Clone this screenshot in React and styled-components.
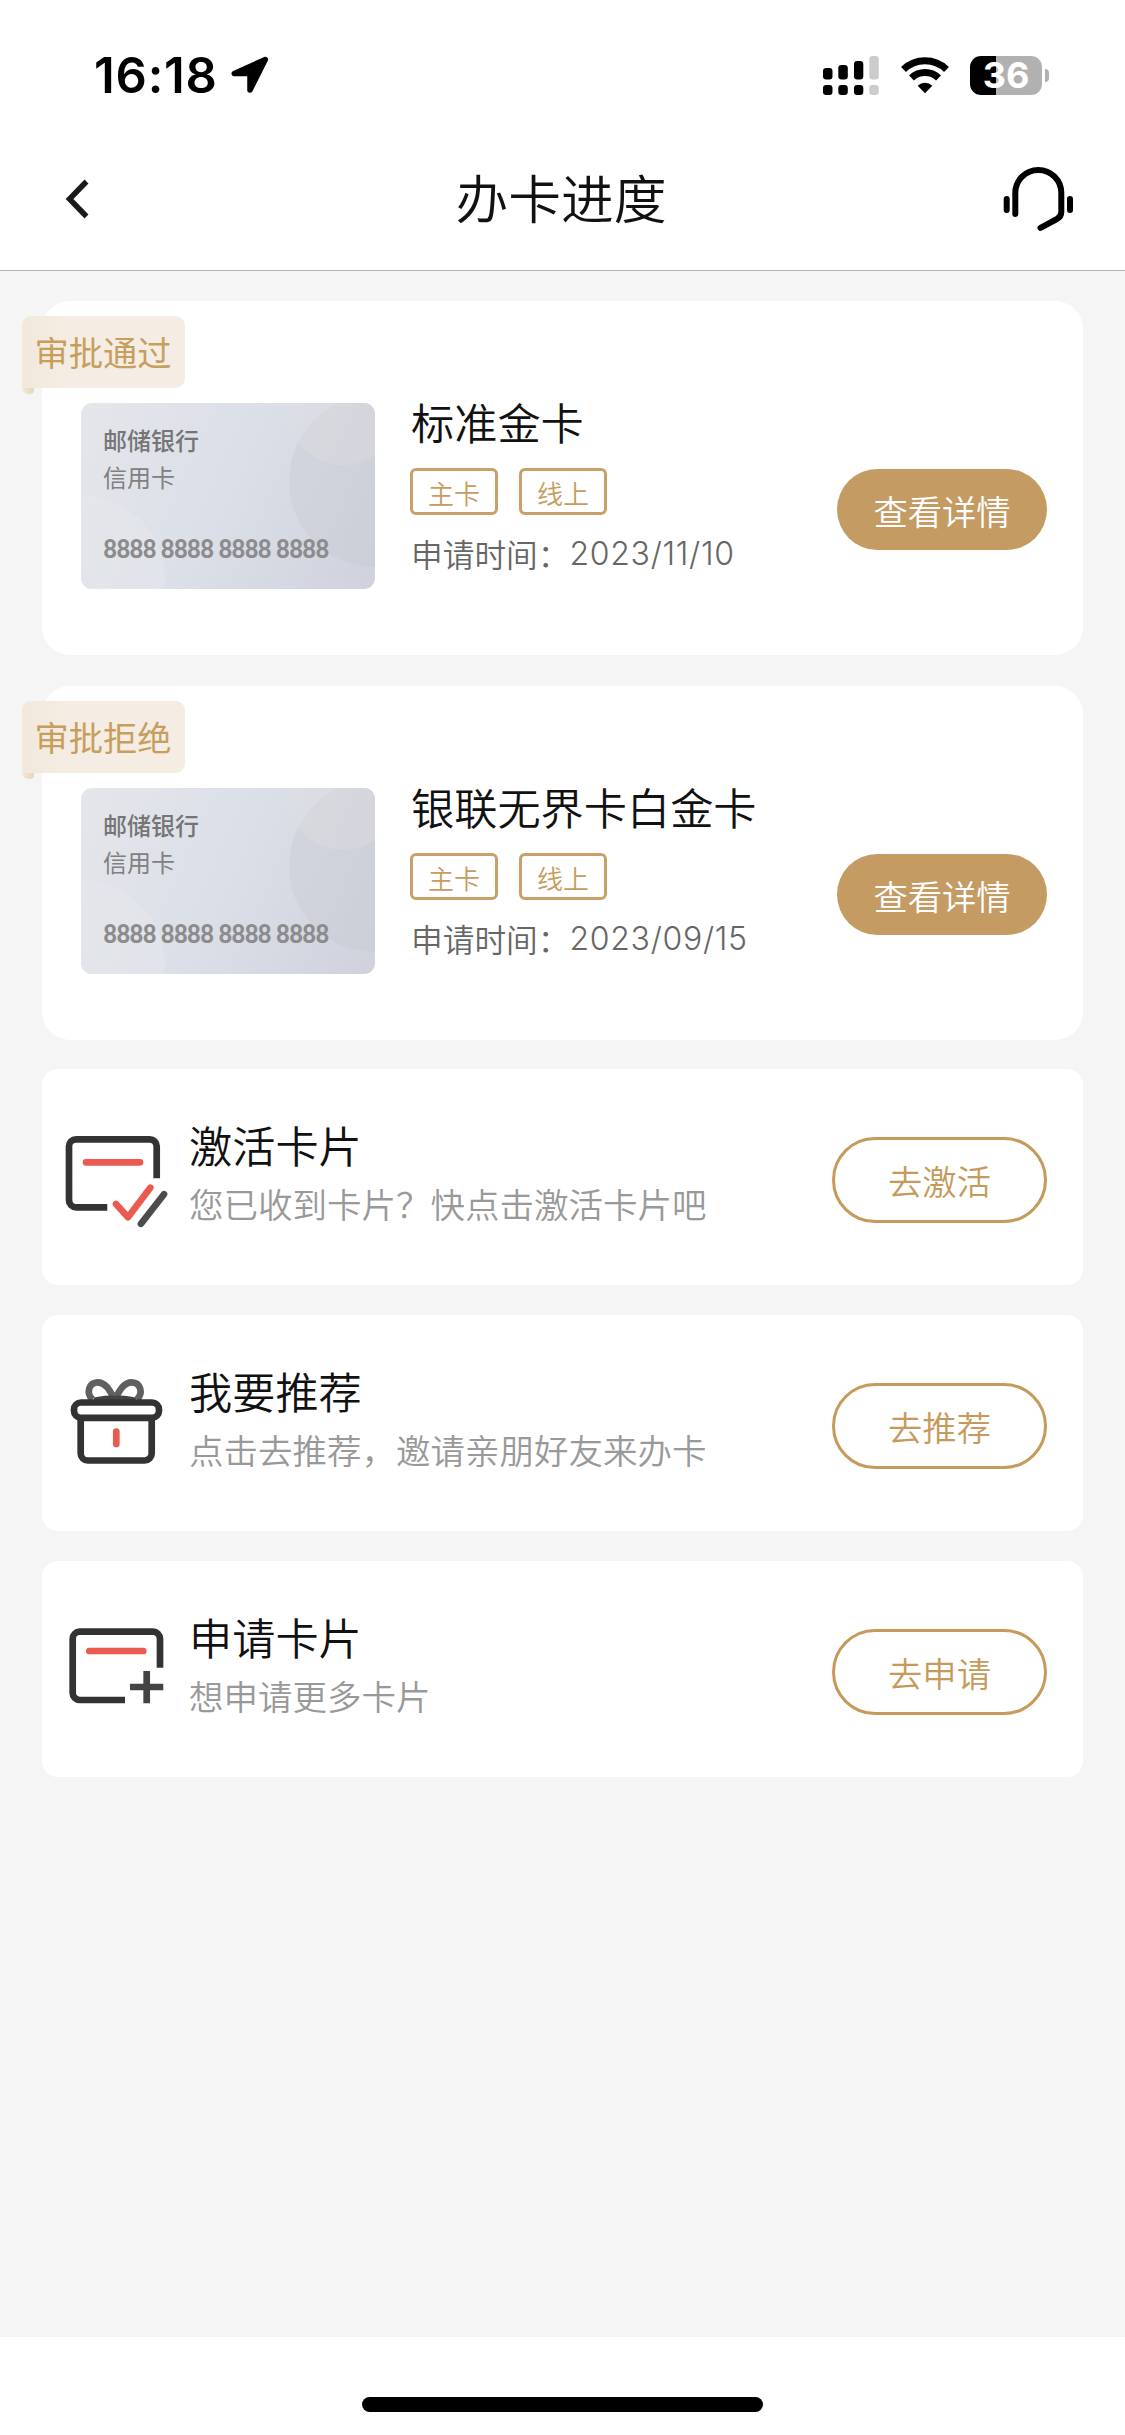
import React from 'react'
import styled, { createGlobalStyle } from 'styled-components'

const records = [
  { status: '审批通过', name: '标准金卡', tags: ['主卡', '线上'], date: '2023/11/10' },
  { status: '审批拒绝', name: '银联无界卡白金卡', tags: ['主卡', '线上'], date: '2023/09/15' },
]

const ActivateIcon = () => (
  <ActionSvg viewBox="0 0 110 110">
    <path d="M47.3 80.3H16a7 7 0 0 1-7-7v-54a7 7 0 0 1 7-7h73.7a7 7 0 0 1 7 7v32" stroke="#333" />
    <path d="M26 35.3h54" stroke="#ea5a4f" strokeLinecap="round" />
    <path d="M56 77l12 13.3 22.3-29.6" stroke="#ea5a4f" strokeLinecap="round" strokeLinejoin="round" />
    <path d="M104 67.2L81 96.8" stroke="#4c4c4c" strokeLinecap="round" />
  </ActionSvg>
)

const GiftIcon = () => (
  <ActionSvg viewBox="0 -1 110 110">
    <path d="M32.500 25.500c-6.500-6-4-17 5.200-17.200 8 0 12 8 17 17 5-9 9-17 17-17 9.200.2 11.700 11.200 5.200 17.200" stroke="#606060" strokeLinejoin="round" />
    <path d="M34 26C41 25 49 23 54.700 24.500c6-1.500 14 .5 21 1.500" stroke="#444" strokeWidth="5" />
    <rect x="14" y="28.500" width="85" height="15.300" rx="7" stroke="#333" />
    <path d="M20.700 43.500v36a7 7 0 0 0 7 7h57a7 7 0 0 0 7-7v-36" stroke="#333" />
    <path d="M56.300 57.500V70" stroke="#ea5a4f" strokeLinecap="round" />
  </ActionSvg>
)

const ApplyIcon = () => (
  <ActionSvg viewBox="0 0 110 110">
    <path d="M65 81H19.700a7 7 0 0 1-7-7V19.700a7 7 0 0 1 7-7H93a7 7 0 0 1 7 7v29" stroke="#333" />
    <path d="M29.300 32h54" stroke="#ea5a4f" strokeLinecap="round" />
    <path d="M70 68h33.300M86.700 52v32.300" stroke="#444" />
  </ActionSvg>
)

const actions = [
  { title: '激活卡片', desc: '您已收到卡片？快点击激活卡片吧', button: '去激活', Icon: ActivateIcon },
  { title: '我要推荐', desc: '点击去推荐，邀请亲朋好友来办卡', button: '去推荐', Icon: GiftIcon },
  { title: '申请卡片', desc: '想申请更多卡片', button: '去申请', Icon: ApplyIcon },
]

const App = () => {
  return (
    <>
      <GlobalStyle />
      <Page>
        {/* Status bar */}
        <StatusBar>
          <Clock>16:18</Clock>
          <svg width="40" height="40" viewBox="0 0 40 40">
            <path d="M36.300 4.500L5.300 18.500H21V35z" stroke="#000" strokeWidth="5.500" strokeLinejoin="round" />
          </svg>
          <StatusRight>
            <svg width="56" height="40" viewBox="0 0 56 40">
              <rect x="0" y="13" width="9.500" height="11.500" rx="3.200" />
              <rect x="15.300" y="10" width="9.500" height="14.500" rx="3.200" />
              <rect x="31" y="6" width="9.300" height="18.500" rx="3.200" />
              <rect x="46.300" y="1" width="9.500" height="23.500" rx="3.200" fill="#ccc" />
              <rect x="0" y="30" width="9.500" height="10" rx="3.200" />
              <rect x="15.300" y="30" width="9.500" height="10" rx="3.200" />
              <rect x="31" y="30" width="9.300" height="10" rx="3.200" />
              <rect x="46.300" y="30" width="9.500" height="10" rx="3.200" fill="#ccc" />
            </svg>
            <WifiSvg width="50" height="40" viewBox="0 0 50 40">
              <path d="M3.500 14.500a31 31 0 0 1 43 0" fill="none" stroke="#000" strokeWidth="7" />
              <path d="M11.500 23a19.500 19.500 0 0 1 27 0" fill="none" stroke="#000" strokeWidth="7" />
              <path d="M25 38.300l-7.300-7.500a10.500 10.500 0 0 1 14.600 0z" />
            </WifiSvg>
            <Battery>36</Battery>
            <BatteryTip />
          </StatusRight>
        </StatusBar>

        {/* Nav bar */}
        <NavBar>
          <svg width="30" height="44" viewBox="0 0 30 44" fill="none">
            <path d="M24.500 4.500L7.500 22l17 17.500" stroke="#1a1a1a" strokeWidth="5.500" />
          </svg>
          <NavTitle>办卡进度</NavTitle>
          <svg width="80" height="80" viewBox="0 0 80 80" fill="none" stroke="#000" strokeWidth="6" strokeLinecap="round">
            <path d="M15.300 55V34a23 23 0 0 1 46 0v19q0 4.500-4.300 7L40.500 68.800" strokeLinejoin="round" />
            <path d="M6.700 40V51M70 40V51" />
          </svg>
        </NavBar>

        <Content>
          <RecordList>
            {records.map((item) => (
              <Record key={item.name}>
                <Badge>{item.status}</Badge>
                <BankCard>
                  <CardCircles viewBox="0 0 294 186">
                    <circle cx="0" cy="176" r="84" fill="#e6e7eb" opacity=".5" />
                    <circle cx="294" cy="78" r="86" fill="#c6c9ce" opacity=".35" />
                    <circle cx="262" cy="6" r="56" fill="#e1e2e2" opacity=".3" />
                  </CardCircles>
                  <BankName>邮储银行</BankName>
                  <BankType>信用卡</BankType>
                  <CardNumber>8888 8888 8888 8888</CardNumber>
                </BankCard>
                <RecordInfo>
                  <RecordName>{item.name}</RecordName>
                  <Tags>
                    {item.tags.map((tag) => <Tag key={tag}>{tag}</Tag>)}
                  </Tags>
                  <ApplyTime>申请时间：<DateText>{item.date}</DateText></ApplyTime>
                </RecordInfo>
                <DetailButton>查看详情</DetailButton>
              </Record>
            ))}
          </RecordList>

          <ActionList>
            {actions.map(({ title, desc, button, Icon }) => (
              <Action key={title}>
                <Icon />
                <ActionText>
                  <ActionTitle>{title}</ActionTitle>
                  <ActionDesc>{desc}</ActionDesc>
                </ActionText>
                <OutlineButton>{button}</OutlineButton>
              </Action>
            ))}
          </ActionList>
        </Content>

        <HomeArea>
          <HomeBar />
        </HomeArea>
      </Page>
    </>
  )
}

export default App;


const GlobalStyle = createGlobalStyle`
* {
  box-sizing: border-box;
}
body {
  margin: 0;
  background: #fff;
  font-family: 'Noto Sans CJK SC', sans-serif;
  font-weight: 350;
}
svg {
  display: block;
  flex-shrink: 0;
}
button {
  font-family: inherit;
  font-weight: inherit;
  padding: 0;
}
`;

const Page = styled.div`
width: 1125px;
height: 2435px;
display: flex;
flex-direction: column;
background: #fff;
`;
const StatusBar = styled.div`
display: flex;
align-items: flex-start;
height: 130px;
padding: 55px 76px 0 94px;
`;
const Clock = styled.div`
width: 135px;
font-family: Inter, sans-serif;
font-size: 49px;
font-weight: 600;
line-height: 41px;
letter-spacing: 0.8px;
white-space: nowrap;
`;
const StatusRight = styled.div`
display: flex;
align-items: center;
margin-left: auto;
`;
const WifiSvg = styled.svg`
margin: 0 20px 0 21px;
`;
const Battery = styled.div`
width: 72px;
height: 39px;
border-radius: 11px;
background: linear-gradient(90deg, #000 26px, #b1b1b1 26px);
color: #fff;
font-family: Inter, sans-serif;
font-size: 36px;
font-weight: 700;
line-height: 39px;
text-align: center;
`;
const BatteryTip = styled.div`
width: 4px;
height: 13px;
margin-left: 3px;
border-radius: 0 5px 5px 0;
background: #b1b1b1;
`;
const NavBar = styled.div`
display: flex;
align-items: center;
justify-content: space-between;
height: 141px;
padding: 0 45px 2px 62px;
border-bottom: 1px solid #b2b2b2;
`;
const NavTitle = styled.h1`
margin: -6px 0 0 30px;
color: #111;
font-size: 52.800px;
font-weight: 350;
line-height: 70px;
`;
const Content = styled.div`
flex: 1;
padding: 30px 42px 0;
background: #f5f5f5;
`;
const RecordList = styled.div`
display: flex;
flex-direction: column;
gap: 31px;
`;
const Record = styled.div`
position: relative;
display: flex;
align-items: flex-start;
height: 354px;
padding: 102px 36px 0 39px;
border-radius: 28px;
background: #fff;
`;
const Badge = styled.div`
position: absolute;
left: -20px;
top: 15px;
width: 163px;
height: 72px;
border-radius: 9px 9px 9px 0;
background: linear-gradient(90deg, #f2e8dc, #f5ede3 30%);
color: #c69f5f;
font-size: 34.300px;
font-weight: 400;
line-height: 71px;
padding-right: 1px;
text-align: center;
&::after {
  content: '';
  position: absolute;
  left: 0;
  top: 72px;
  width: 12px;
  height: 6px;
  border-radius: 0 0 4px 6px;
  background: linear-gradient(90deg, #f3e9dd, #e5d5bc);
}
`;
const BankCard = styled.div`
position: relative;
flex-shrink: 0;
width: 294px;
height: 186px;
padding: 21px 0 0 22px;
border-radius: 11px;
overflow: hidden;
background: linear-gradient(115deg, #e4e6ea, #dbdfe8 48%, #cfd2dc);
color: #808080;
`;
const CardCircles = styled.svg`
position: absolute;
left: 0;
top: 0;
width: 294px;
height: 186px;
`;
const BankName = styled.div`
position: relative;
color: #757575;
font-size: 24px;
font-weight: 500;
line-height: 32px;
`;
const BankType = styled.div`
position: relative;
margin-top: 5px;
font-size: 24px;
font-weight: 400;
line-height: 32px;
`;
const CardNumber = styled.div`
position: relative;
margin-top: 42px;
color: #8c8c8c;
font-family: Roboto, sans-serif;
font-size: 25px;
font-weight: 600;
line-height: 30px;
letter-spacing: -1.150px;
white-space: nowrap;
`;
const RecordInfo = styled.div`
flex: 1;
padding-left: 36px;
white-space: nowrap;
`;
const RecordName = styled.h2`
margin: -12px 0 0;
color: #111;
font-size: 43.200px;
font-weight: 350;
line-height: 60px;
`;
const Tags = styled.div`
display: flex;
gap: 21px;
margin: 17px 0 0 -1px;
`;
const Tag = styled.span`
width: 88px;
height: 47px;
border: 3px solid #c9a067;
border-radius: 6px;
color: #c69c5f;
font-size: 26px;
line-height: 43px;
text-align: center;
`;
const ApplyTime = styled.div`
display: flex;
margin-top: 18px;
color: #666;
font-size: 31.700px;
line-height: 40px;
`;
const DateText = styled.span`
padding-top: 1px;
font-family: Inter, sans-serif;
font-size: 32px;
letter-spacing: 0.700px;
`;
const DetailButton = styled.button`
width: 210px;
height: 81px;
margin-top: 66px;
border: none;
border-radius: 41px;
background-color: #c49b63;
color: #fff;
font-size: 34.300px;
line-height: 82px;
`;
const ActionList = styled.div`
display: flex;
flex-direction: column;
gap: 30px;
margin-top: 29px;
`;
const Action = styled.div`
display: flex;
align-items: flex-start;
height: 216px;
padding: 0 36px 0 18px;
border-radius: 16px;
background: #fff;
`;
const ActionSvg = styled.svg`
width: 110px;
height: 110px;
margin-top: 58px;
fill: none;
stroke-width: 6.700px;
`;
const ActionText = styled.div`
flex: 1;
padding: 45px 0 0 19px;
white-space: nowrap;
`;
const ActionTitle = styled.h3`
margin: 0;
color: #111;
font-size: 43.200px;
font-weight: 350;
line-height: 60px;
`;
const ActionDesc = styled.p`
margin: 5px 0 0;
color: #999;
font-size: 34.500px;
line-height: 48px;
`;
const OutlineButton = styled.button`
width: 215px;
height: 86px;
margin-top: 68px;
border: 3px solid #c69a5a;
border-radius: 43px;
background: none;
color: #c69a5a;
font-size: 34.300px;
line-height: 81px;
`;
const HomeArea = styled.div`
display: flex;
justify-content: center;
height: 98px;
padding-top: 60px;
`;
const HomeBar = styled.div`
width: 401px;
height: 15px;
border-radius: 8px;
background: #000;
`;
